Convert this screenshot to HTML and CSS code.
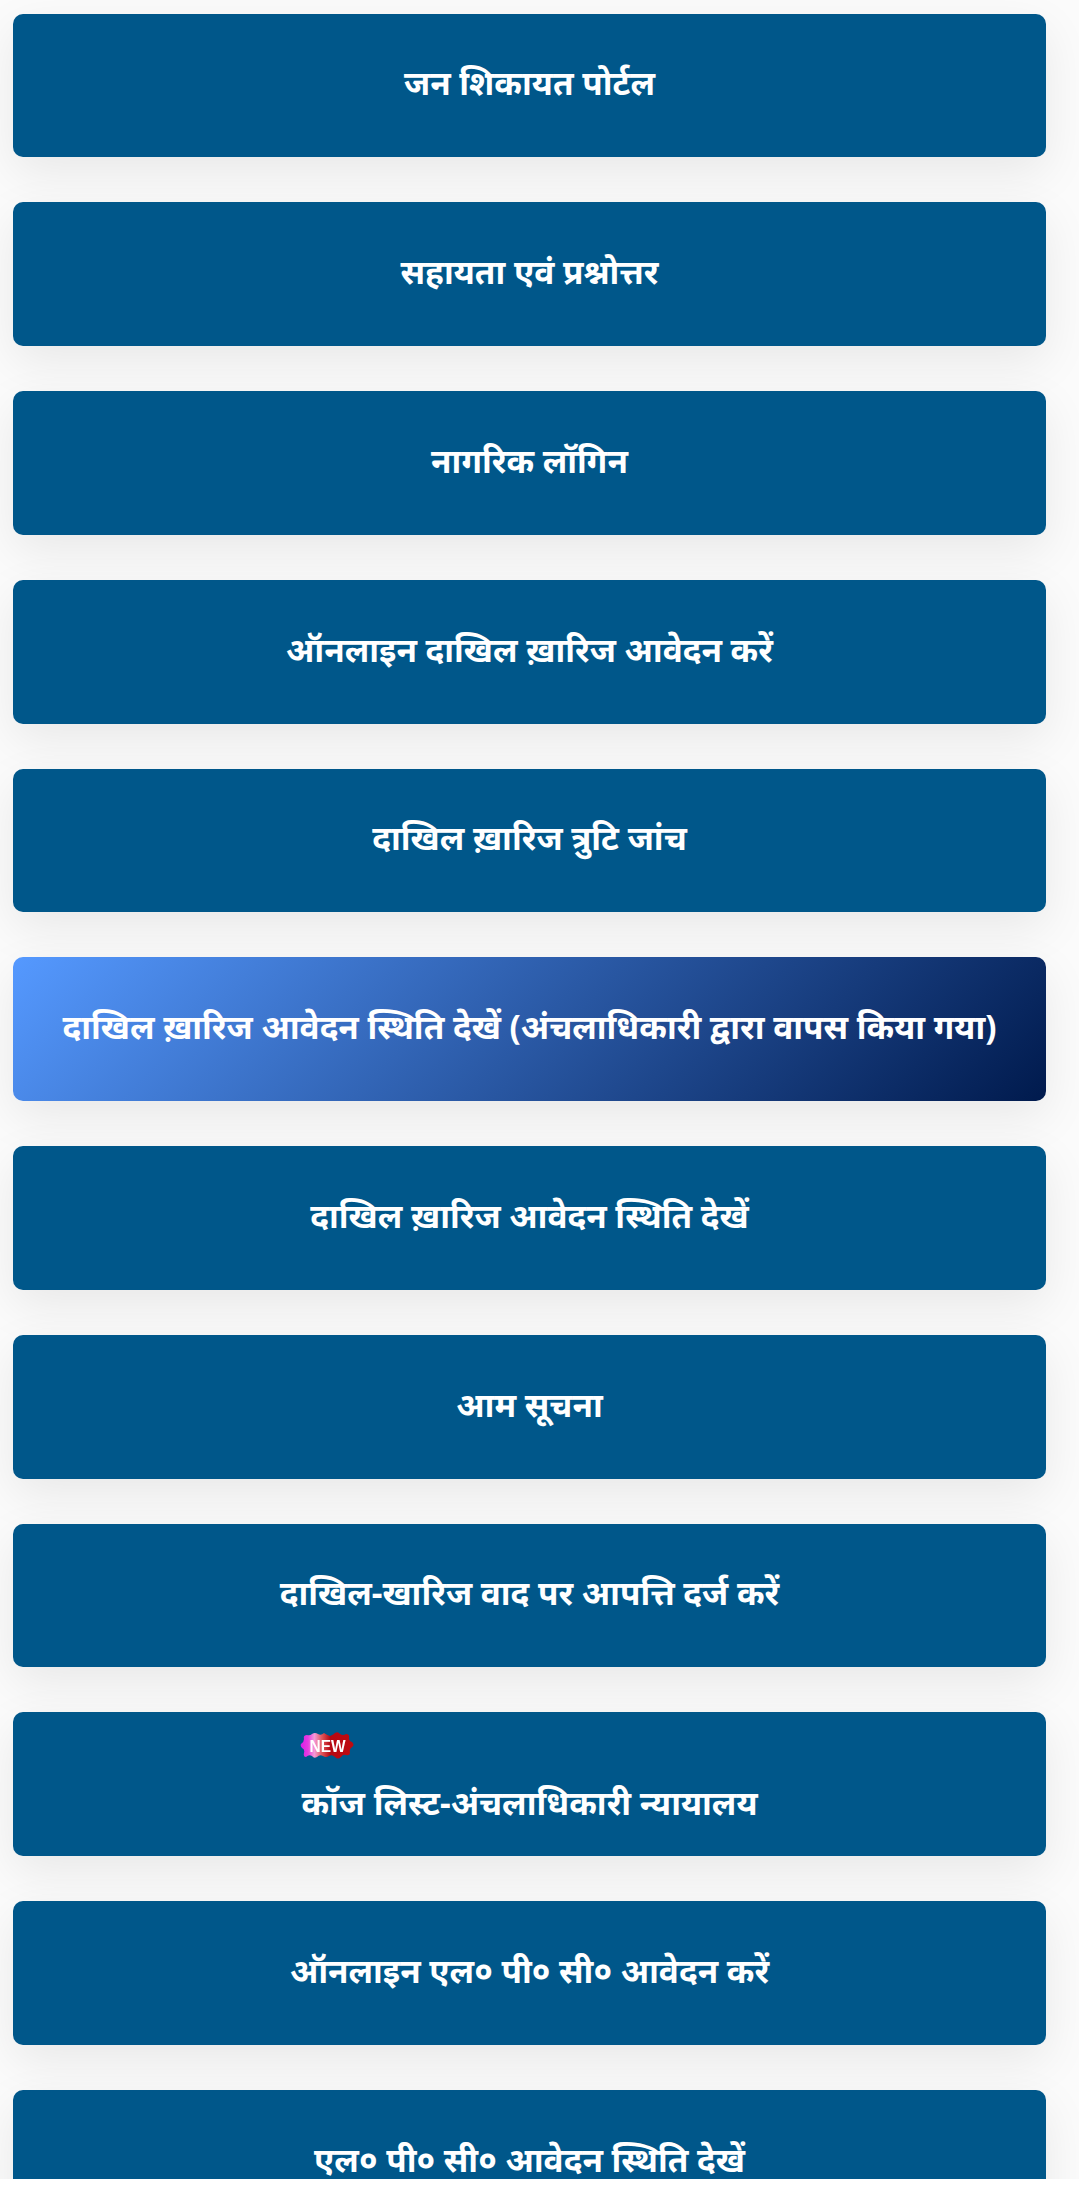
FILE: index.html
```html
<!DOCTYPE html>
<html lang="hi">
<head>
    <meta charset="UTF-8">
    <title>सेवाएं</title>
    <link rel="stylesheet" href="styles.css">
</head>
<body>
    <div class="menu-list">
        <a class="menu-card" href="#">जन शिकायत पोर्टल</a>
        <a class="menu-card" href="#">सहायता एवं प्रश्नोत्तर</a>
        <a class="menu-card" href="#">नागरिक लॉगिन</a>
        <a class="menu-card" href="#">ऑनलाइन दाखिल ख़ारिज आवेदन करें</a>
        <a class="menu-card" href="#">दाखिल ख़ारिज त्रुटि जांच</a>
        <a class="menu-card menu-card-highlight" href="#">दाखिल ख़ारिज आवेदन स्थिति देखें (अंचलाधिकारी द्वारा वापस किया गया)</a>
        <a class="menu-card" href="#">दाखिल ख़ारिज आवेदन स्थिति देखें</a>
        <a class="menu-card" href="#">आम सूचना</a>
        <a class="menu-card" href="#">दाखिल-खारिज वाद पर आपत्ति दर्ज करें</a>
        <a class="menu-card menu-card-new" href="#">
            <span class="menu-card-inner">
                <svg class="new-badge" viewBox="0 0 53 27" aria-label="NEW">
                    <defs>
                        <linearGradient id="newFill" x1="0" y1="0" x2="1" y2="0">
                            <stop offset="0" stop-color="#d81ee8"/>
                            <stop offset="0.14" stop-color="#e83be0"/>
                            <stop offset="0.26" stop-color="#f59ad8"/>
                            <stop offset="0.4" stop-color="#e2585c"/>
                            <stop offset="0.56" stop-color="#b50812"/>
                            <stop offset="1" stop-color="#c00a10"/>
                        </linearGradient>
                    </defs>
                    <path d="M0 12 Q3 10 3 7 Q2 3 6 3 Q9 4 11 2 Q14 0 17 2 Q20 4 23 1 Q26 3 29 4 Q32 3 34 1 Q37 -1 39 2 Q42 4 45 2 Q49 2 48 6 Q48 9 51 10 Q54 13 51 15 Q48 17 49 20 Q49 24 45 23 Q42 22 40 25 Q37 28 34 25 Q31 22 28 24 Q25 26 22 24 Q19 22 16 25 Q13 27 11 24 Q8 22 5 25 Q2 25 3 21 Q4 17 1 16 Q-1 14 0 12 Z" fill="url(#newFill)"/>
                    <text x="26.5" y="19.5" text-anchor="middle" textLength="36" lengthAdjust="spacingAndGlyphs" class="new-badge-text">NEW</text>
                </svg>
                <span>कॉज लिस्ट-अंचलाधिकारी न्यायालय</span>
            </span>
        </a>
        <a class="menu-card" href="#">ऑनलाइन एल० पी० सी० आवेदन करें</a>
        <a class="menu-card" href="#">एल० पी० सी० आवेदन स्थिति देखें</a>
    </div>
</body>
</html>
```
FILE: styles.css
```css
* {
    margin: 0;
    padding: 0;
    box-sizing: border-box;
}

html, body {
    background: #fff;
    height: 2185px;
    overflow: hidden;
}

.menu-list {
    height: 2179px;
    overflow: hidden;
    padding: 13.5px 33px 0 13px;
    display: flex;
    flex-direction: column;
    gap: 45px;
    background: #fbfbfb;
    font-family: "Noto Sans", "Noto Sans Devanagari", sans-serif;
}

.menu-card {
    flex: 0 0 143.75px;
    display: flex;
    align-items: center;
    justify-content: center;
    padding-bottom: 6px;
    background: #00578a;
    border-radius: 10px;
    box-shadow: 0 16px 48px rgba(0, 0, 0, 0.08);
    color: #fff;
    font-size: 33.3px;
    font-weight: 700;
    text-decoration: none;
    text-align: center;
}

.menu-card-highlight {
    background: linear-gradient(135deg, #5599ff 0%, #001a4d 100%);
}

.menu-card-new {
    align-items: flex-start;
    padding: 20px 0 0;
}

.menu-card-inner {
    display: flex;
    flex-direction: column;
    align-items: flex-start;
    gap: 20px;
    line-height: 1.4;
}

.new-badge {
    display: block;
    width: 53px;
    height: 27px;
    overflow: visible;
    filter: blur(0.35px);
}

.new-badge-text {
    fill: #fff;
    font-family: "Liberation Sans", sans-serif;
    font-size: 17px;
    font-weight: 700;
}
```
